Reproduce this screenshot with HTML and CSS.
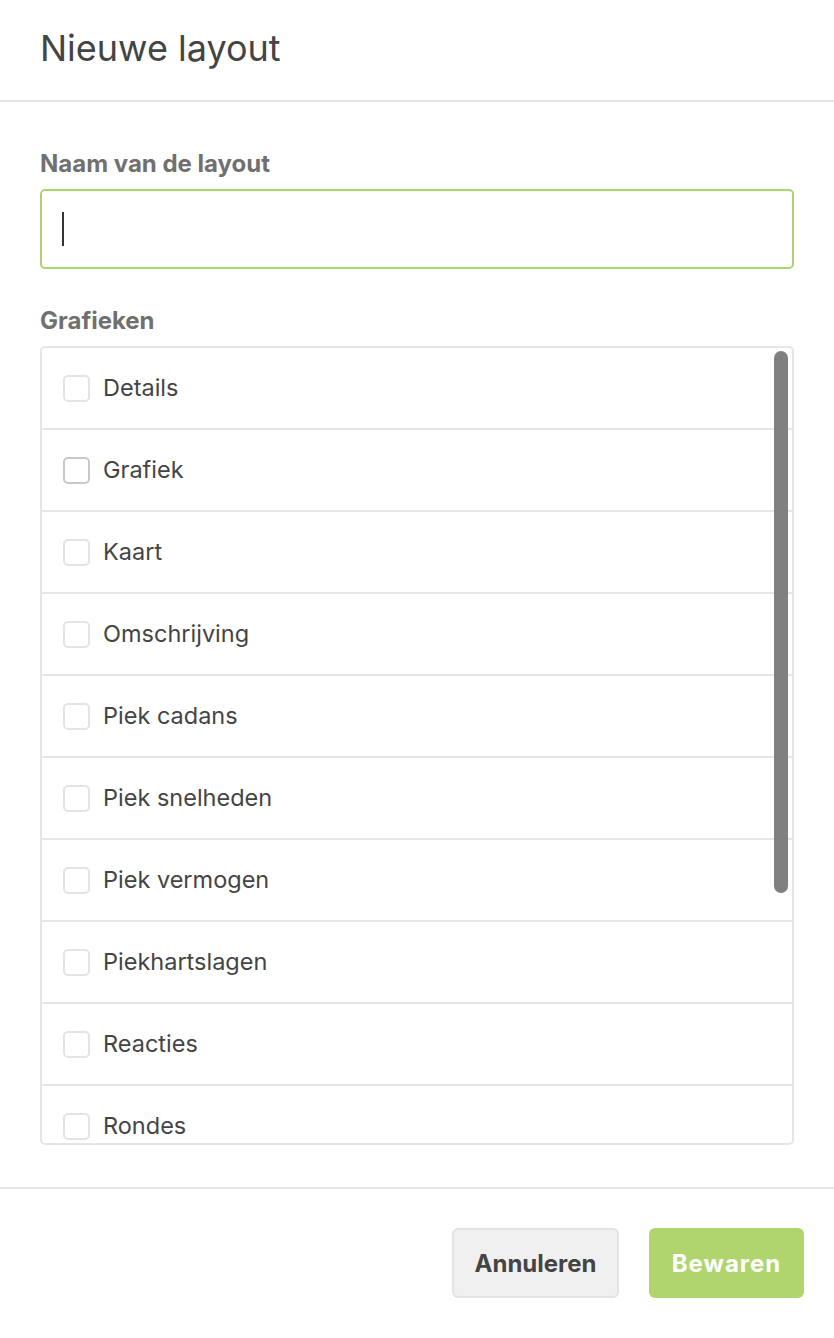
FILE: index.html
```html
<!DOCTYPE html>
<html lang="nl">
<head>
<meta charset="utf-8">
<title>Nieuwe layout</title>
<link rel="stylesheet" href="styles.css">
</head>
<body>
<div class="modal">
  <header class="modal-header">
    <h1 class="modal-title">Nieuwe layout</h1>
  </header>
  <main class="modal-body">
    <label class="field-label" for="naam">Naam van de layout</label>
    <div class="text-input"><span class="caret"></span></div>
    <div class="field-label list-label">Grafieken</div>
    <div class="list-box">
      <ul class="list">
        <li class="row"><span class="check"></span><span class="row-text">Details</span></li>
        <li class="row"><span class="check check-hover"></span><span class="row-text">Grafiek</span></li>
        <li class="row"><span class="check"></span><span class="row-text">Kaart</span></li>
        <li class="row"><span class="check"></span><span class="row-text">Omschrijving</span></li>
        <li class="row"><span class="check"></span><span class="row-text">Piek cadans</span></li>
        <li class="row"><span class="check"></span><span class="row-text">Piek snelheden</span></li>
        <li class="row"><span class="check"></span><span class="row-text">Piek vermogen</span></li>
        <li class="row"><span class="check"></span><span class="row-text">Piekhartslagen</span></li>
        <li class="row"><span class="check"></span><span class="row-text">Reacties</span></li>
        <li class="row"><span class="check"></span><span class="row-text">Rondes</span></li>
      </ul>
      <div class="scroll-thumb"></div>
    </div>
  </main>
  <footer class="modal-footer">
    <button class="btn btn-cancel">Annuleren</button>
    <button class="btn btn-save">Bewaren</button>
  </footer>
</div>
</body>
</html>
```
FILE: styles.css
```css
* { box-sizing: border-box; }
html, body {
  margin: 0;
  padding: 0;
  background: #fff;
  font-family: Inter, "Noto Sans", "Liberation Sans", sans-serif;
  color: #444;
}
.modal {
  width: 834px;
  height: 1338px;
  display: flex;
  flex-direction: column;
}
.modal-header {
  height: 102px;
  border-bottom: 2px solid #e6e6e6;
  padding: 0 40px;
  display: flex;
  align-items: center;
}
.modal-title {
  margin: 0;
  font-size: 36px;
  font-weight: 400;
  color: #444;
  position: relative;
  top: -2px;
}
.modal-body {
  padding: 46px 40px 0 40px;
  display: flex;
  flex-direction: column;
  height: 1087px;
  border-bottom: 2px solid #e6e6e6;
}
.field-label {
  display: block;
  font-size: 24px;
  font-weight: 700;
  color: #707070;
  line-height: 32px;
  margin-bottom: 9px;
}
.text-input {
  height: 80px;
  border: 2px solid #a9d56f;
  border-radius: 5px;
  display: flex;
  align-items: center;
  padding-left: 20px;
  margin-bottom: 36px;
}
.caret {
  width: 2px;
  height: 34px;
  background: #333;
}
.list-box {
  position: relative;
  height: 799px;
  border: 2px solid #e6e6e6;
  border-radius: 5px;
  overflow: hidden;
}
.list {
  list-style: none;
  margin: 0;
  padding: 0;
}
.row {
  height: 82px;
  border-bottom: 2px solid #e6e6e6;
  display: flex;
  align-items: center;
  padding-left: 21px;
  gap: 13px;
}
.check {
  width: 27px;
  height: 27px;
  border: 2px solid #e4e4e4;
  border-radius: 5px;
  background: #fff;
  flex: none;
}
.check-hover { border-color: #c8c8c8; }
.row-text {
  font-size: 23.5px;
  color: #444;
  position: relative;
  top: -1px;
}
.scroll-thumb {
  position: absolute;
  top: 3px;
  right: 4px;
  width: 14px;
  height: 542px;
  background: #808080;
  border-radius: 7px;
}
.modal-footer {
  flex: 1;
  display: flex;
  justify-content: flex-end;
  align-items: flex-start;
  padding: 39px 30px 0 0;
  gap: 30px;
}
.btn {
  height: 70px;
  border-radius: 6px;
  font-family: Inter, "Noto Sans", "Liberation Sans", sans-serif;
  font-size: 24px;
  font-weight: 700;
  padding: 0;
}
.btn-cancel {
  background: #f0f0f0;
  border: 2px solid #e3e3e3;
  color: #444;
  width: 167px;
}
.btn-save {
  background: #b0d56f;
  border: none;
  color: #fff;
  width: 155px;
  letter-spacing: 1px;
}
```
